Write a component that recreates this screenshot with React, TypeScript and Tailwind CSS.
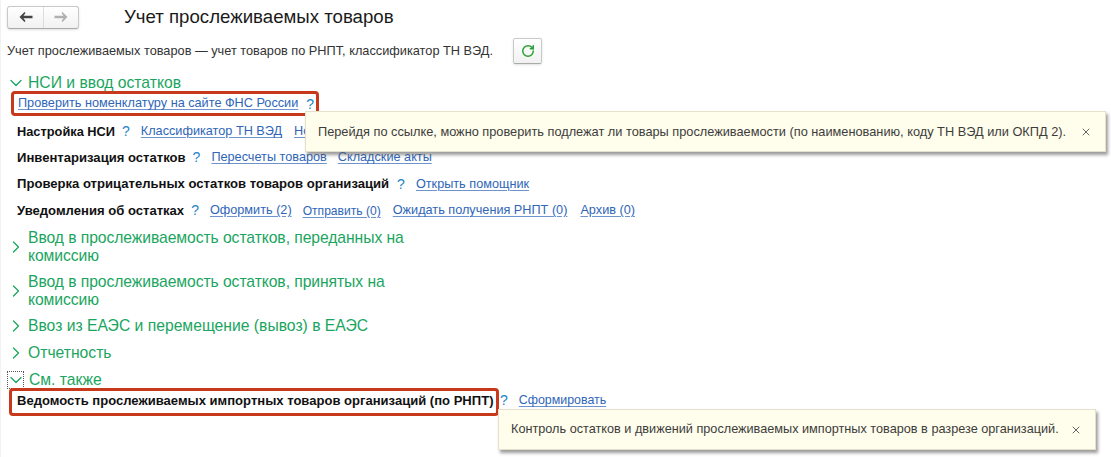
import { ChevronDown, ChevronRight, RotateCw, X } from "lucide-react";
import type { ReactNode } from "react";

const Link = ({ children }: { children: ReactNode }) => (
  <a className="text-[#2f66b8] underline underline-offset-2 decoration-[#6f94cc]">{children}</a>
);

const Hint = () => <span className="text-[#1f83c4] text-[14px] font-medium">?</span>;

const Section = ({ title, open, boxed }: { title: ReactNode; open?: boolean; boxed?: boolean }) => (
  <div className="flex items-center text-[15.7px] leading-[18px] text-[#1aa560]">
    <div className={`w-[17px] h-[18px] shrink-0 flex items-center justify-center ${boxed ? "mr-[5px] border border-dotted border-[#555]" : "mr-[4px]"}`}>
      {open ? (
        <ChevronDown size={20} strokeWidth={1.5} className="shrink-0" />
      ) : (
        <ChevronRight size={20} strokeWidth={1.5} className="shrink-0" />
      )}
    </div>
    <div className="w-[390px]">{title}</div>
  </div>
);

const Tip = ({ text, className }: { text: string; className: string }) => (
  <div className={`absolute flex items-center bg-[#fffdeb] border border-[#e4e0cc] shadow-[2px_3px_3px_rgba(90,90,90,0.6)] text-[#3c3c3c] ${className}`}>
    <span className="flex-1 whitespace-nowrap">{text}</span>
    <X size={12} className="text-[#666] shrink-0" />
  </div>
);

export default function App() {
  return (
    <div className="relative w-[1111px] h-[457px] overflow-hidden bg-white shadow-[inset_1px_0_0_#f2f2f2] text-[12.7px] text-[#333] font-['Liberation_Sans',sans-serif]">
      <div className="flex items-center h-[26px] mt-[4px] ml-[7px]">
        <div className="flex w-[72px] h-[23px] rounded-[3px] border border-[#c9c9c9] border-b-[#aaa] bg-gradient-to-b from-white to-[#f1f1f1] shadow-sm">
          <div className="w-[36px] border-r border-[#ddd] flex items-center justify-center">
            <svg width="14" height="10" viewBox="0 0 14 10" className="text-[#444]" fill="currentColor">
              <path d="M5.5 0 L6.5 1 L4.5 3.7 H13.5 V6.3 H4.5 L6.5 9 L5.5 10 L0.5 5 Z" />
            </svg>
          </div>
          <div className="flex-1 flex items-center justify-center">
            <svg width="14" height="10" viewBox="0 0 14 10" className="text-[#b0b0b0]" fill="currentColor">
              <path d="M8.5 0 L7.5 1 L9.5 3.7 H0.5 V6.3 H9.5 L7.5 9 L8.5 10 L13.5 5 Z" />
            </svg>
          </div>
        </div>
        <h1 className="ml-[45px] text-[18.65px] text-[#1a1a1a]">Учет прослеживаемых товаров</h1>
      </div>

      <div className="flex items-center h-[27px] mt-[7px] ml-[7px]">
        <span className="w-[506px] text-[12.75px]">Учет прослеживаемых товаров — учет товаров по РНПТ, классификатор ТН ВЭД.</span>
        <div className="w-[29px] h-[26px] flex items-center justify-center rounded-[2px] border border-[#c9c9c9] border-b-[#aaa] bg-gradient-to-b from-white to-[#f1f1f1] shadow-sm">
          <RotateCw size={14} strokeWidth={2.6} className="text-[#2aa03a]" />
        </div>
      </div>

      <div className="mt-[10px] ml-[7px]">
        <Section title="НСИ и ввод остатков" open />
      </div>

      <div className="-mt-[1px] ml-[11px] w-[308px] h-[25px] flex items-center gap-[8px] pl-[4px] pt-[1px] rounded-[4px] border-[3px] border-[#c8381a]">
        <Link>Проверить номенклатуру на сайте ФНС России</Link>
        <Hint />
      </div>

      <div className="flex flex-col ml-[17px] mt-[8.6px] gap-[12.33px]">
        <div className="flex items-center h-[14px] gap-[7px] whitespace-nowrap">
          <b className="text-[12.8px] text-[#111]">Настройка НСИ</b>
          <Hint />
          <span className="ml-[4px]"><Link>Классификатор ТН ВЭД</Link></span>
          <span className="ml-[5px]"><Link>Номенклатура</Link></span>
        </div>
        <div className="flex items-center h-[14px] gap-[7px]">
          <b className="text-[13.08px] text-[#111]">Инвентаризация остатков</b>
          <Hint />
          <span className="ml-[4px]"><Link>Пересчеты товаров</Link></span>
          <span className="ml-[4px]"><Link>Складские акты</Link></span>
        </div>
        <div className="flex items-center h-[14px] gap-[7px]">
          <b className="text-[13.08px] text-[#111]">Проверка отрицательных остатков товаров организаций</b>
          <span className="ml-[1px]"><Hint /></span>
          <span className="ml-[4px]"><Link>Открыть помощник</Link></span>
        </div>
        <div className="flex items-center h-[14px] gap-[7px]">
          <b className="text-[13.08px] text-[#111]">Уведомления об остатках</b>
          <Hint />
          <span className="ml-[4px]"><Link>Оформить (2)</Link></span>
          <span className="ml-[4px] text-[12.1px]"><Link>Отправить (0)</Link></span>
          <span className="ml-[5px]"><Link>Ожидать получения РНПТ (0)</Link></span>
          <span className="ml-[6px]"><Link>Архив (0)</Link></span>
        </div>
      </div>

      <div className="flex flex-col ml-[7px] mt-[11.4px] gap-[8px]">
        <Section title={<span className="tracking-[-0.07px]">Ввод в прослеживаемость остатков, переданных на комиссию</span>} />
        <Section title={<span className="tracking-[-0.07px]">Ввод в прослеживаемость остатков, принятых на комиссию</span>} />
        <Section title="Ввоз из ЕАЭС и перемещение (вывоз) в ЕАЭС" />
        <div className="mt-[0.6px]">
          <Section title="Отчетность" />
        </div>
        <div className="mt-[1.4px]">
          <Section title="См. также" open boxed />
        </div>
      </div>

      <div className="-mt-[1px] ml-[9px] flex items-center">
        <div className="h-[28px] w-[490px] flex items-center pl-[5px] pb-[2px] rounded-[4px] border-[3px] border-[#c8381a]">
          <b className="text-[13.05px] text-[#111] whitespace-nowrap">Ведомость прослеживаемых импортных товаров организаций (по РНПТ)</b>
        </div>
        <span className="ml-[1px] mb-[3px]"><Hint /></span>
        <span className="ml-[11px] mb-[3px] text-[12.4px]"><Link>Сформировать</Link></span>
      </div>

      <Tip
        text="Перейдя по ссылке, можно проверить подлежат ли товары прослеживаемости (по наименованию, коду ТН ВЭД или ОКПД 2)."
        className="left-[305px] top-[111px] w-[801px] h-[41px] pl-[12px] pr-[13px] text-[12.78px]"
      />
      <Tip
        text="Контроль остатков и движений прослеживаемых импортных товаров в разрезе организаций."
        className="left-[498px] top-[409px] w-[598px] h-[41px] pl-[12px] pr-[13px]"
      />
    </div>
  );
}
